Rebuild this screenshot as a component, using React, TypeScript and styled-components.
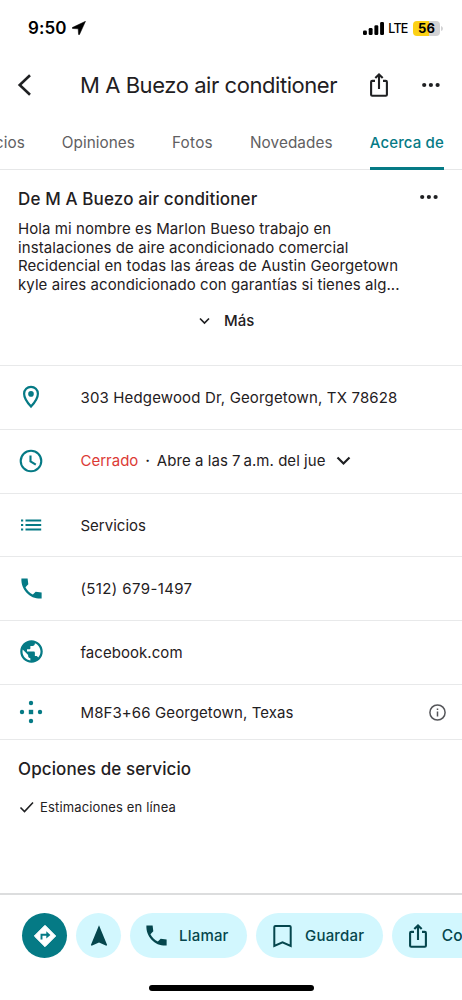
import React from 'react';
import styled, { createGlobalStyle } from 'styled-components';
import { MdPublic, MdNavigation } from 'react-icons/md';

const teal = '#057a85';
const ink = '#1f2022';
const deep = '#05464d';

const Global = createGlobalStyle`
  * { box-sizing: border-box; }
  body { margin: 0; background: #fff; }
  svg { display: block; flex: none; }
`;

const Screen = styled.div`
  width: 462px;
  height: 1000px;
  overflow: hidden;
  display: flex;
  flex-direction: column;
  background: #fff;
  color: ${ink};
  font-family: Inter, 'Liberation Sans', sans-serif;
`;

const Text = styled.span<{ $size?: number; $spacing?: number; $weight?: number; $color?: string }>`
  font-size: ${p => p.$size ?? 15}px;
  letter-spacing: ${p => p.$spacing ?? 0}px;
  font-weight: ${p => p.$weight ?? 400};
  color: ${p => p.$color ?? 'inherit'};
  white-space: nowrap;
`;

const StatusBar = styled.div`
  height: 56px;
  flex: none;
  display: flex;
  align-items: center;
  justify-content: space-between;
  padding: 0 19px 0 28px;
  color: #000;
`;

const StatusGroup = styled.div<{ $gap: number }>`
  display: flex;
  align-items: center;
  gap: ${p => p.$gap}px;
`;

const Battery = styled.div`
  width: 27px;
  height: 15px;
  border-radius: 4px;
  display: flex;
  align-items: center;
  justify-content: center;
  background: linear-gradient(90deg, #fcd116 0 60%, #d2d2d4 60%);
`;

const Header = styled.header`
  height: 58px;
  flex: none;
  display: flex;
  align-items: center;
  padding: 0 21px 0 17px;
`;

const Title = styled.h1`
  margin: 0 0 0 48px;
  width: 272px;
  font-size: 22px;
  font-weight: 400;
  letter-spacing: -0.44px;
  white-space: nowrap;
`;

const HeaderActions = styled.div`
  margin-left: auto;
  display: flex;
  align-items: center;
  gap: 29px;
`;

const Tabs = styled.nav`
  height: 56px;
  flex: none;
  display: flex;
  gap: 37px;
  padding-right: 18px;
  justify-content: flex-end;
  border-bottom: 1px solid #e6e7e8;
  color: #5f6062;
`;

const Tab = styled.div<{ $active?: boolean }>`
  height: 56px;
  flex: none;
  display: flex;
  align-items: center;
  padding-top: 3px;
  border-bottom: 3px solid ${p => (p.$active ? teal : 'transparent')};
  border-radius: 2px 2px 0 0;
  color: ${p => (p.$active ? teal : 'inherit')};
`;

const About = styled.section`
  height: 196px;
  flex: none;
  padding: 16px 23px 0 18px;
  border-bottom: 1px solid #e8e9ea;
`;

const AboutHead = styled.div`
  height: 25px;
  display: flex;
  align-items: center;
  justify-content: space-between;
`;

const MenuSlot = styled.div`
  padding-bottom: 4px;
`;

const Description = styled.p`
  margin: 9px 0 0;
  font-size: 15px;
  line-height: 18.6px;
  white-space: nowrap;
`;

const Line = styled.span`
  display: block;
  letter-spacing: 0.075px;
`;

const More = styled.div`
  display: flex;
  align-items: center;
  gap: 13px;
  margin-top: 17px;
  padding-left: 180px;
`;

const Row = styled.div<{ $height: number }>`
  height: ${p => p.$height}px;
  flex: none;
  display: flex;
  align-items: center;
  padding: 0 16px 0 18px;
  border-bottom: 1px solid #e8e9ea;
`;

const RowIcon = styled.div<{ $lift?: number }>`
  width: 62.5px;
  flex: none;
  padding-bottom: ${p => p.$lift ?? 0}px;
  color: ${teal};
`;

const Hours = styled.div`
  display: flex;
  align-items: center;
  padding-bottom: 2px;
`;

const Separator = styled.span`
  width: 18.5px;
  text-align: center;
  font-size: 15px;
  font-weight: 600;
`;

const ExpandSlot = styled.div`
  padding-left: 10px;
`;

const InfoSlot = styled.div`
  margin-left: auto;
`;

const Services = styled.section`
  flex: 1;
  padding: 19px 18px 0;
`;

const Check = styled.div`
  display: flex;
  align-items: center;
  gap: 5px;
  margin-top: 20px;
`;

const ActionBar = styled.footer`
  height: 107px;
  flex: none;
  display: flex;
  flex-direction: column;
  justify-content: space-between;
  align-items: center;
  border-top: 2px solid #dcddde;
  padding: 18px 0 9px;
`;

const Actions = styled.div`
  width: 462px;
  padding-left: 22px;
  display: flex;
  gap: 9px;
  overflow: hidden;
`;

const Pill = styled.button<{ $width: number; $primary?: boolean; $round?: boolean }>`
  width: ${p => p.$width}px;
  height: 45px;
  flex: none;
  border: 0;
  border-radius: 23px;
  padding: ${p => (p.$round ? 0 : '0 0 0 13px')};
  display: flex;
  align-items: center;
  justify-content: ${p => (p.$round ? 'center' : 'flex-start')};
  gap: 9px;
  font-family: inherit;
  background: ${p => (p.$primary ? teal : '#d2f7fe')};
  color: ${p => (p.$primary ? '#fff' : deep)};
`;

const HomeIndicator = styled.div`
  width: 165px;
  height: 6px;
  border-radius: 3px;
  background: #000;
`;

const Dots = () => (
  <svg width="20" height="6" viewBox="0 0 20 6" fill={ink}>
    <circle cx="3.2" cy="3" r="2.1" /><circle cx="9.9" cy="3" r="2.1" /><circle cx="16.6" cy="3" r="2.1" />
  </svg>
);

const Share = () => (
  <svg width="26" height="26" viewBox="0 0 26 26" fill="none" stroke="currentColor" strokeWidth="2.1">
    <path d="M9 8.9H6.2q-1.100 0-1.100 1.100V22.700q0 1.100 1.100 1.100H19.800q1.100 0 1.100-1.100V10q0-1.100-1.100-1.100H17M13 17V2.800M9.300 6.100L13 2.400l3.700 3.700" />
  </svg>
);

const Bookmark = () => (
  <svg width="27" height="26" viewBox="0 0 27 26" fill="none" stroke="currentColor" strokeWidth="2">
    <path d="M5.300 23V4q0-1.100 1.100-1.100H20.600q1.100 0 1.100 1.100V23l-8.200-3.700z" />
  </svg>
);

const Phone = () => (
  <svg width="27" height="27" viewBox="0 0 24 24" fill="currentColor">
    <path d="M21 15.460l-5.270-.610-2.520 2.520c-2.830-1.440-5.150-3.750-6.590-6.590l2.530-2.530L8.540 3H3.030C2.450 13.180 10.820 21.550 21 20.970v-5.510z" />
  </svg>
);

const Turn = () => (
  <svg width="24" height="24" viewBox="0 0 24 24">
    <path d="M12 1.300L22.700 12 12 22.700 1.300 12z" fill="#fff" stroke="#fff" strokeWidth="1" strokeLinejoin="round" />
    <path d="M8.500 15.500v-4.700h6" fill="none" stroke={teal} strokeWidth="1.900" />
    <path d="M13.300 7.300l4.100 3.600-4.100 3.600z" fill={teal} />
  </svg>
);

const List = () => (
  <svg width="26" height="26" viewBox="0 0 26 26" fill="currentColor">
    <path d="M3 7.400h2.200v2.200H3zM3 11.900h2.200v2.200H3zM3 16.400h2.200v2.200H3zM7.500 7.400h15.700v2.200H7.500zM7.500 11.900h15.700v2.200H7.500zM7.500 16.400h15.700v2.200H7.500z" />
  </svg>
);

const App = () => (
  <Screen>
    <Global />
    <StatusBar>
      <StatusGroup $gap={5}>
        <Text $size={17} $weight={600} $spacing={0.1}>9:50</Text>
        <svg width="14" height="14" viewBox="0 0 14 14"><path d="M13.500.3L.3 6.500q-.6.800.4 1l5.500.3.300 5.500q.3 1 1 .2z" stroke="#000" strokeWidth=".5" /></svg>
      </StatusGroup>
      <StatusGroup $gap={4}>
        <svg width="21" height="13" viewBox="0 0 21 13">
          <rect x="0" y="8.500" width="3.900" height="4.500" rx="1.300" /><rect x="5.700" y="6" width="3.900" height="7" rx="1.300" />
          <rect x="11.400" y="3.300" width="3.900" height="9.700" rx="1.300" /><rect x="17.100" y="0" width="3.900" height="13" rx="1.300" />
        </svg>
        <StatusGroup $gap={5.5}>
          <Text $size={12.5} $weight={500} $spacing={-0.8}>LTE</Text>
          <StatusGroup $gap={1}>
            <Battery><Text $size={13} $weight={700}>56</Text></Battery>
            <svg width="2" height="5" viewBox="0 0 2 5"><path d="M0 0q2 .5 2 2.500t-2 2.500z" fill="#d2d2d4" /></svg>
          </StatusGroup>
        </StatusGroup>
      </StatusGroup>
    </StatusBar>

    <Header>
      <svg width="15" height="24" viewBox="0 0 15 24" fill="none" stroke={ink} strokeWidth="2.600"><path d="M13 2.200L2.700 12l10.300 9.800" /></svg>
      <Title>M A Buezo air conditioner</Title>
      <HeaderActions><Share /><Dots /></HeaderActions>
    </Header>

    <Tabs>
      <Tab><Text $size={15.3} $spacing={0.05}>Servicios</Text></Tab>
      <Tab><Text $size={15.3} $spacing={0.05}>Opiniones</Text></Tab>
      <Tab><Text $size={15.3} $spacing={0.25}>Fotos</Text></Tab>
      <Tab><Text $size={15.3} $spacing={0.1}>Novedades</Text></Tab>
      <Tab $active><Text $spacing={0.15} $weight={500}>Acerca de</Text></Tab>
    </Tabs>

    <About>
      <AboutHead>
        <Text $size={17} $weight={500} $spacing={0.13}>De M A Buezo air conditioner</Text>
        <MenuSlot><Dots /></MenuSlot>
      </AboutHead>
      <Description>
        <Line>Hola mi nombre es Marlon Bueso trabajo en</Line>
        <Line>instalaciones de aire acondicionado comercial</Line>
        <Line>Recidencial en todas las áreas de Austin Georgetown</Line>
        <Line>kyle aires acondicionado con garantías si tienes alg...</Line>
      </Description>
      <More>
        <svg width="13" height="8" viewBox="0 0 13 8" fill="none" stroke={ink} strokeWidth="1.700"><path d="M2 1.500l4.500 4.500 4.500-4.500" /></svg>
        <Text $weight={500}>Más</Text>
      </More>
    </About>

    <Row $height={64}>
      <RowIcon $lift={1}>
        <svg width="26" height="26" viewBox="0 0 26 26" fill="none" stroke={teal} strokeWidth="2.200">
          <path d="M13 22.600Q6.100 15 6.100 9.700a6.900 6.900 0 0 1 13.800 0Q19.900 15 13 22.600z" /><circle cx="13" cy="9.900" r="2.800" fill={teal} stroke="none" />
        </svg>
      </RowIcon>
      <Text $spacing={0.15}>303 Hedgewood Dr, Georgetown, TX 78628</Text>
    </Row>
    <Row $height={64}>
      <RowIcon $lift={1}>
        <svg width="26" height="26" viewBox="0 0 26 26" fill="none" stroke={teal} strokeWidth="2.100"><circle cx="13" cy="13" r="10.300" /><path d="M12.500 7.500v6l5.300 3.200" /></svg>
      </RowIcon>
      <Hours>
        <Text $color="#dc3a35">Cerrado</Text>
        <Separator>·</Separator>
        <Text $spacing={0.05}>Abre a las 7{'\u2009'}a.m. del jue</Text>
        <ExpandSlot>
          <svg width="15" height="10" viewBox="0 0 15 10" fill="none" stroke={ink} strokeWidth="2.200"><path d="M1.500 1.500l6 6 6-6" /></svg>
        </ExpandSlot>
      </Hours>
    </Row>
    <Row $height={63}>
      <RowIcon $lift={1}><List /></RowIcon>
      <Text>Servicios</Text>
    </Row>
    <Row $height={64}>
      <RowIcon $lift={1}><Phone /></RowIcon>
      <Text $spacing={0.38}>(512) 679-1497</Text>
    </Row>
    <Row $height={64}>
      <RowIcon $lift={2}><MdPublic size={27} /></RowIcon>
      <Text $spacing={0.05}>facebook.com</Text>
    </Row>
    <Row $height={55}>
      <RowIcon>
        <svg width="26" height="26" viewBox="0 0 26 26" fill={teal}>
          <circle cx="13" cy="4" r="2.200" /><circle cx="13" cy="22" r="2.200" /><circle cx="4" cy="13" r="2.200" /><circle cx="22" cy="13" r="2.200" /><rect x="10.800" y="10.800" width="4.400" height="4.400" />
        </svg>
      </RowIcon>
      <Text $spacing={0.1}>M8F3+66 Georgetown, Texas</Text>
      <InfoSlot>
        <svg width="17" height="17" viewBox="0 0 17 17" fill="none" stroke="#55565a" strokeWidth="1.500"><circle cx="8.500" cy="8.500" r="7.600" /><path d="M8.500 7.500v5M8.500 4.500v1.600" /></svg>
      </InfoSlot>
    </Row>

    <Services>
      <Text as="div" $size={17} $weight={500} $spacing={0.1}>Opciones de servicio</Text>
      <Check>
        <svg width="17" height="14" viewBox="0 0 17 14" fill="none" stroke={ink} strokeWidth="1.600"><path d="M2.500 7.500l4 4 8.500-9" /></svg>
        <Text $size={13} $spacing={0.15}>Estimaciones en línea</Text>
      </Check>
    </Services>

    <ActionBar>
      <Actions>
        <Pill $width={45} $primary $round><Turn /></Pill>
        <Pill $width={45} $round><MdNavigation size={26} /></Pill>
        <Pill $width={117}><Phone /><Text $weight={500} $spacing={0.2}>Llamar</Text></Pill>
        <Pill $width={127}><Bookmark /><Text $weight={500} $spacing={0.2}>Guardar</Text></Pill>
        <Pill $width={140}><Share /><Text $size={15.5} $weight={500} $spacing={0.3}>&#8202;Compartir</Text></Pill>
      </Actions>
      <HomeIndicator />
    </ActionBar>
  </Screen>
);

export default App;
